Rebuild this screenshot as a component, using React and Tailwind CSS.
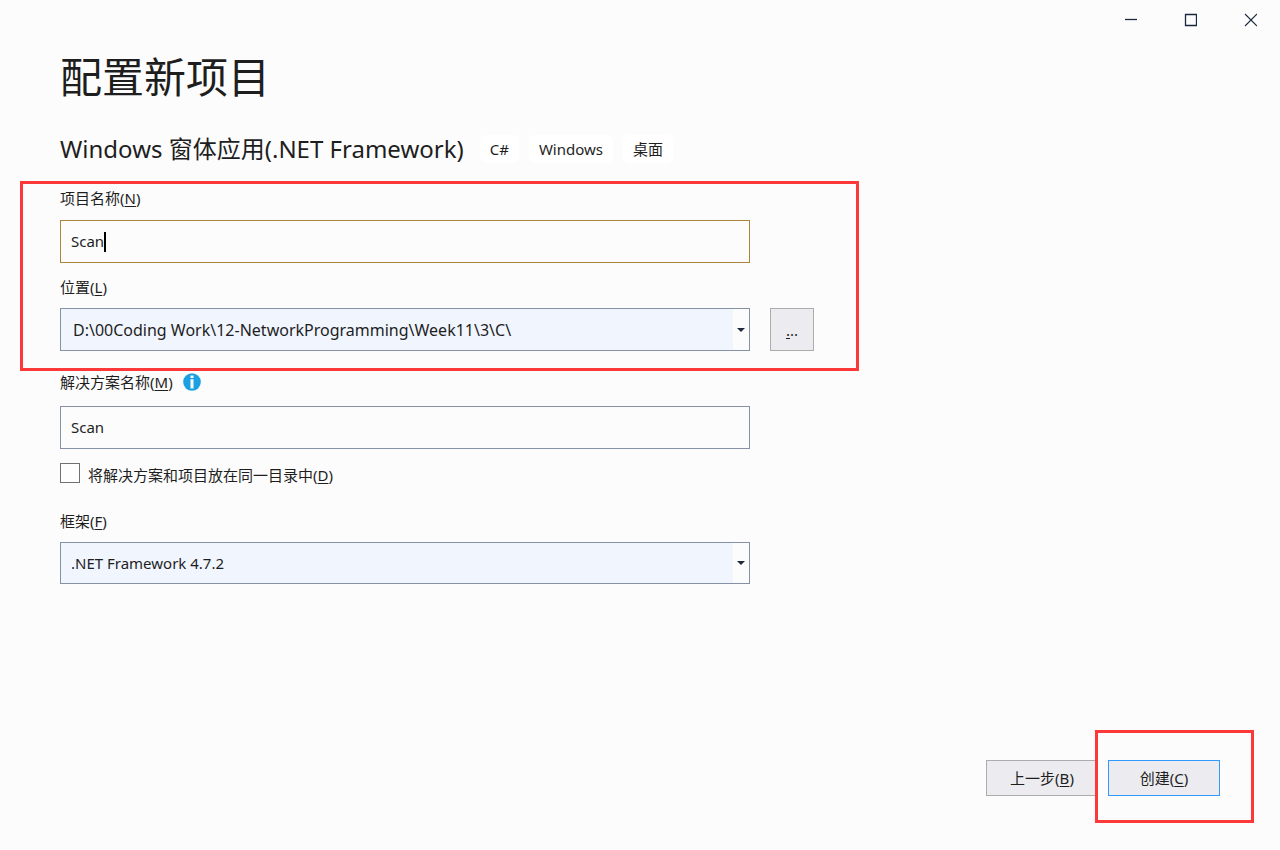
import { useState } from "react";

function Key({ children }) {
  return <span className="underline decoration-1 underline-offset-2">{children}</span>;
}

function Frame({ className }) {
  return <div aria-hidden="true" className={`pointer-events-none absolute border-3 border-[#fc3838] ${className}`} />;
}

function Combo({ id, options, className, selectClassName }) {
  return (
    <div className={`relative flex w-full max-w-[690px] border border-[#8591a5] bg-[#fcfcfc] ${className}`}>
      <select id={id} className={`mr-4 min-w-0 flex-1 appearance-none bg-[#f1f5fe] outline-none ${selectClassName}`}>
        {options.map((o) => (
          <option key={o}>{o}</option>
        ))}
      </select>
      <svg aria-hidden="true" viewBox="0 0 8 4" className="pointer-events-none absolute top-1/2 right-1 h-1 w-2 -translate-y-1/2">
        <path d="M0 0h8L4 4z" fill="#1b293e" />
      </svg>
    </div>
  );
}

function Tag({ children }) {
  return <span className="rounded-md bg-white px-2.5 leading-7">{children}</span>;
}

function WindowButton({ label, children }) {
  return (
    <button type="button" aria-label={label} className="flex h-10 w-15 items-center justify-center">
      <svg viewBox="0 0 14 14" className="h-3.5 w-3.5" fill="none" stroke="#1b293e">
        {children}
      </svg>
    </button>
  );
}

export default function App() {
  const [name, setName] = useState("Scan");
  const [solution, setSolution] = useState("Scan");
  return (
    <div className="flex min-h-screen flex-col bg-[#fcfcfc] font-['Noto_Sans','Noto_Sans_CJK_SC',sans-serif] text-[15px] leading-5 text-[#1e1e1e]">
      <header className="flex justify-end">
        <WindowButton label="最小化">
          <path d="M2 6.5h12" strokeWidth="1.3" />
        </WindowButton>
        <WindowButton label="最大化">
          <path d="M2.5 1.5h11v11h-11z" strokeWidth="1.3" />
        </WindowButton>
        <WindowButton label="关闭">
          <path d="M2 1l12 12M14 1L2 13" strokeWidth="1.1" />
        </WindowButton>
      </header>

      <main className="flex-1 px-15">
        <h1 className="mt-3 text-[42px] leading-[50px]">配置新项目</h1>
        <div className="mt-[31px] flex flex-wrap items-center">
          <h2 className="mr-4 text-2xl">Windows 窗体应用(.NET Framework)</h2>
          <div className="flex gap-2.5">
            <Tag>C#</Tag>
            <Tag>Windows</Tag>
            <Tag>桌面</Tag>
          </div>
        </div>

        <form className="mt-[23px] flex flex-col">
          <div className="relative max-w-[799px] pb-5">
            <Frame className="-top-[7px] right-0 bottom-0 -left-10" />
            <label htmlFor="project" className="block">
              项目名称(<Key>N</Key>)
            </label>
            <div className="relative mt-3 flex h-[43px] w-full max-w-[690px]">
              <input
                id="project"
                value={name}
                onChange={(e) => setName(e.target.value)}
                className="w-full border border-[#a9853a] bg-[#fcfcfc] px-2.5 pb-0.5 caret-transparent outline-none"
              />
              <span aria-hidden="true" className="absolute top-3 left-11 h-5 w-0.5 bg-black" />
            </div>
            <label htmlFor="location" className="mt-3.5 block">
              位置(<Key>L</Key>)
            </label>
            <div className="mt-[11px] flex gap-5">
              <Combo id="location" className="h-[43px]" selectClassName="px-3 text-base" options={["D:\\00Coding Work\\12-NetworkProgramming\\Week11\\3\\C\\"]} />
              <button type="button" aria-label="浏览" className="h-[43px] w-11 shrink-0 border border-[#acacac] bg-[#ececf0]">
                <Key>.</Key>..
              </button>
            </div>
          </div>

          <div className="mt-px flex items-center gap-2.5">
            <label htmlFor="solution">
              解决方案名称(<Key>M</Key>)
            </label>
            <svg aria-hidden="true" viewBox="0 0 18 18" className="h-[18px] w-[18px]">
              <circle cx="9" cy="9" r="8.8" fill="#1ba1e2" />
              <path d="M7.5 2.5h3v2.5h-3zM7.5 6.3h3v9.2h-3z" fill="#fff" />
            </svg>
          </div>
          <input
            id="solution"
            value={solution}
            onChange={(e) => setSolution(e.target.value)}
            className="mt-3.5 h-[43px] w-full max-w-[690px] border border-[#8591a5] bg-[#fcfcfc] px-2.5 pb-0.5 outline-none"
          />
          <div className="mt-3.5 flex items-start gap-2">
            <input id="same-dir" type="checkbox" className="h-5 w-5 appearance-none border border-[#717171] bg-[#fefefe] checked:bg-[#1ba1e2]" />
            <label htmlFor="same-dir" className="pt-0.5">
              将解决方案和项目放在同一目录中(<Key>D</Key>)
            </label>
          </div>
          <label htmlFor="framework" className="mt-[26px]">
            框架(<Key>F</Key>)
          </label>
          <Combo id="framework" className="mt-[11px] h-[42px]" selectClassName="px-2.5" options={[".NET Framework 4.7.2"]} />
        </form>
      </main>

      <footer className="flex justify-end gap-2.5 px-15 pt-10 pb-[54px]">
        <button type="button" className="h-9 w-28 border border-[#acacac] bg-[#ececf0]">
          上一步(<Key>B</Key>)
        </button>
        <div className="relative">
          <button type="button" className="h-9 w-28 border border-[#3399ff] bg-[#ececf0]">
            创建(<Key>C</Key>)
          </button>
          <Frame className="-top-[30px] -right-[34px] -bottom-[27px] -left-[13px]" />
        </div>
      </footer>
    </div>
  );
}
